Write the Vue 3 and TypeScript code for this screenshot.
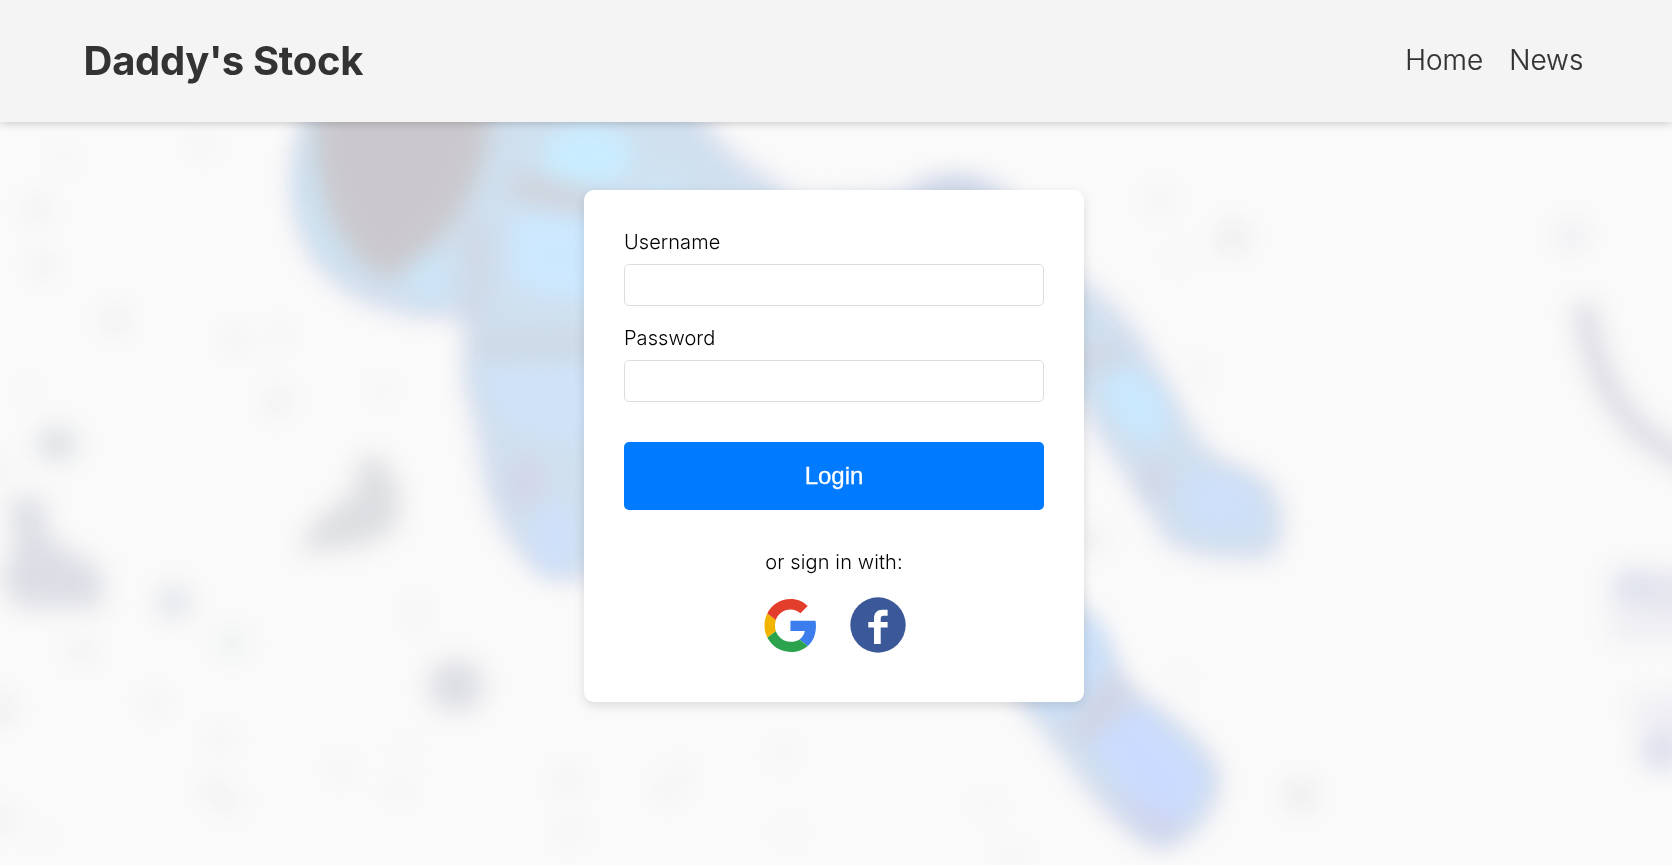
<script setup lang="ts">
import { ref } from 'vue'

type Speck = [x: number, y: number, r: number, opacity: number]

const username = ref('')
const password = ref('')

const links: string[] = ['Home', 'News']

// Faint star dust scattered behind the astronaut
const specks: Speck[] = [
  [63, 157, 11, 0.16], [37, 209, 13, 0.34], [42, 265, 13, 0.3], [115, 320, 13, 0.4],
  [203, 143, 13, 0.18], [235, 340, 13, 0.24], [280, 335, 11, 0.2], [278, 402, 13, 0.36],
  [28, 391, 10, 0.16], [382, 390, 10, 0.18], [3, 468, 11, 0.28], [82, 651, 12, 0.36],
  [155, 703, 12, 0.24], [0, 709, 14, 0.46], [220, 740, 12, 0.24], [212, 789, 12, 0.24],
  [228, 802, 12, 0.26], [343, 769, 11, 0.2], [400, 791, 11, 0.2], [416, 614, 11, 0.24],
  [407, 748, 9, 0.12], [0, 820, 13, 0.36], [40, 837, 9, 0.14],
  [568, 782, 13, 0.26], [570, 832, 12, 0.2], [668, 790, 12, 0.24], [682, 772, 10, 0.18],
  [783, 755, 10, 0.2], [790, 832, 10, 0.14], [987, 806, 11, 0.16], [1012, 856, 11, 0.18],
  [1160, 200, 13, 0.24], [1233, 238, 15, 0.5], [1180, 257, 10, 0.14], [1199, 373, 11, 0.18],
  [1092, 540, 14, 0.3], [1180, 677, 9, 0.16], [1301, 795, 15, 0.5],
]
</script>

<template>
  <div class="page">
    <svg class="backdrop" viewBox="0 0 1672 865" preserveAspectRatio="xMidYMid slice" aria-hidden="true">
      <defs>
        <filter id="soft" x="-20%" y="-20%" width="140%" height="140%" color-interpolation-filters="sRGB">
          <feGaussianBlur stdDeviation="12" />
        </filter>
        <filter id="detail" x="-30%" y="-30%" width="160%" height="160%" color-interpolation-filters="sRGB">
          <feGaussianBlur stdDeviation="12.500" />
        </filter>
      </defs>

      <g filter="url(#detail)" fill="#dedede">
        <circle v-for="([x, y, r, o], i) in specks" :key="i" :cx="x" :cy="y" :r="r" :opacity="o" />
      </g>

      <g filter="url(#detail)">
        <ellipse cx="57" cy="444" rx="20" ry="16" fill="#dbdee2" />
        <ellipse cx="174" cy="602" rx="17" ry="16" fill="#e2e4ea" />
        <ellipse cx="232" cy="643" rx="14" ry="13" fill="#eceff0" />
        <ellipse cx="456" cy="686" rx="28" ry="26" fill="#dddee4" />
        <path d="M300 552 L308 530 L338 502 L356 492 L358 460 L382 456 L401 492 L395 530 L362 546 Z" fill="#dddee1" />
        <path d="M9 498 L44 498 L48 536 L102 570 L102 608 L18 608 L0 580 L14 548 Z" fill="#dddee5" />
        <circle cx="1571" cy="235" r="13" fill="#eaebf0" />
        <path d="M1584 304 C1590 352 1606 400 1644 434 Q1664 450 1700 468" fill="none" stroke="#dbd9e2" stroke-width="22" />
        <path d="M1612 570 H1700 V640 H1612 Z" fill="#eeeef3" />
        <ellipse cx="1636" cy="586" rx="24" ry="15" fill="#dcdfec" />
        <path d="M1655 572 H1710 V610 H1655 Z" fill="#e5e5ee" />
        <path d="M1630 698 L1700 690 V768 L1650 762 Z" fill="#efeef4" />
        <circle cx="1660" cy="752" r="18" fill="#d9dceb" />
      </g>

      <g filter="url(#soft)">
        <path
          d="M316 100 C291 148 288 215 319 260 C357 310 405 313 466 315 C476 328 463 358 471 397 C482 423 482 483 505 526 C526 560 545 576 573 576 L700 560 L940 600 L1026 700 C1067 758 1104 812 1148 840 C1176 853 1218 812 1216 778 C1208 741 1149 707 1123 690 C1106 651 1092 623 1070 602 L900 480 L1080 392 C1106 455 1148 486 1165 535 C1188 555 1230 556 1270 554 C1286 529 1280 483 1246 475 C1223 467 1204 455 1195 438 C1175 410 1160 380 1142 348 C1120 313 1098 292 1070 280 L1010 199 C980 175 930 177 899 199 L798 205 C774 180 731 169 704 125 L690 95 Z"
          fill="#d0e0ef"
          stroke="#d3d5e8"
          stroke-width="7"
        />
      </g>

      <g filter="url(#detail)">
        <path d="M308 140 L299 190 L318 248 L370 292 L352 268 L322 220 L314 140 Z" fill="#cbe3f1" />
        <path d="M320 90 H492 C492 172 460 238 388 278 C342 264 300 180 320 90 Z" fill="#cac8cc" />
        <ellipse cx="430" cy="278" rx="20" ry="25" fill="#cbe5f7" />
        <ellipse cx="588" cy="156" rx="46" ry="30" fill="#c9edff" />
        <path d="M512 174 L600 190 L594 213 L514 199 Z" fill="#cfd1d9" />
        <path d="M510 212 L610 220 V306 L514 288 Z" fill="#cce8ff" />
        <path d="M466 222 L488 225 L484 320 L468 320 Z" fill="#cfd6e4" />
        <path d="M472 337 L600 335 V354 L480 356 Z" fill="#cdd6e2" />
        <path d="M476 368 L600 362 V450 L506 424 Z" fill="#cfe2f8" />
        <ellipse cx="526" cy="482" rx="17" ry="25" fill="#d3d4e7" />
        <ellipse cx="555" cy="538" rx="21" ry="36" fill="#cfe0fb" />
        <ellipse cx="662" cy="186" rx="18" ry="12" fill="#cde6f7" />
        <ellipse cx="955" cy="194" rx="34" ry="13" fill="#cfd4e6" />
        <ellipse cx="1096" cy="358" rx="32" ry="12" fill="#cfd5e2" />
        <ellipse cx="1136" cy="404" rx="25" ry="42" fill="#c9e8ff" transform="rotate(-34 1136 404)" />
        <ellipse cx="1156" cy="480" rx="13" ry="22" fill="#d1d5e5" />
        <path d="M1180 470 L1244 480 L1268 528 L1190 530 Z" fill="#cddffa" />
        <path d="M1030 620 L1094 620 L1112 662 L1064 718 L1026 700 Z" fill="#c9dffa" />
        <path d="M1110 670 L1134 698 L1088 744 L1068 732 Z" fill="#d0d3e4" />
        <path d="M1090 742 L1140 706 L1208 774 L1182 826 L1142 808 Z" fill="#cadbff" />
        <path d="M1088 776 L1120 796 L1184 820 L1162 844 Z" fill="#d0d3ec" />
      </g>
    </svg>

    <header class="topbar">
      <h1 class="brand">Daddy's Stock</h1>
      <nav class="nav">
        <a v-for="link in links" :key="link" class="nav-link" href="#">{{ link }}</a>
      </nav>
    </header>

    <main class="content">
      <form class="card" @submit.prevent>
        <label class="label" for="username">Username</label>
        <input id="username" v-model="username" class="field" type="text" />
        <label class="label" for="password">Password</label>
        <input id="password" v-model="password" class="field" type="password" />
        <button class="login" type="submit">Login</button>
        <p class="hint">or sign in with:</p>
        <div class="providers">
          <button class="provider" type="button" aria-label="Google">
            <svg class="google" viewBox="0 0 48 49" aria-hidden="true">
              <path fill="#3b7ded" d="M47.600 20.200H24.400v9.500h13.300c-.6 3.200-2.300 5.900-4.900 7.700l7.700 6C45.100 39.200 48 33 48 25.100c0-1.700-.1-3.300-.4-4.900z" />
              <path fill="#2ba24c" d="M24.400 49c6.500 0 11.900-2.100 16.100-5.600l-7.700-6c-2.100 1.400-5.100 2.100-8.400 2.100-6.300 0-11.600-4.200-13.500-9.900L3 35.700C7 43.600 15.100 49 24.400 49z" />
              <path fill="#f1b500" d="M10.900 29.600c-.5-1.500-.8-3.300-.8-5.100s.3-3.500.8-5.100L3 13.300C1.300 16.700.4 20.500.4 24.500S1.300 32.400 3 35.700z" />
              <path fill="#e23e2b" d="M24.400 9.600c3.500 0 6.700 1.200 9.200 3.600l6.800-6.800C36.200 2.400 30.900 0 24.400 0 15.100 0 7 5.400 3 13.300l7.900 6.100c1.900-5.700 7.200-9.800 13.500-9.800z" />
            </svg>
          </button>
          <button class="provider" type="button" aria-label="Facebook">
            <svg class="facebook" viewBox="0 0 56 56" aria-hidden="true">
              <circle cx="28" cy="28" r="27.700" fill="#3b5998" />
              <path fill="#fff" d="M24 47V30.500h-5.700V25H24v-3.400c0-5.700 3.200-8.800 8.400-8.800h5.200v5.900h-4c-2 0-2.900 1-2.900 2.800V25h6.900v5.500h-6.900V47z" />
            </svg>
          </button>
        </div>
      </form>
    </main>
  </div>
</template>

<style>
body {
  margin: 0;
  background: #fafafa;
}
</style>

<style scoped>
.page {
  position: relative;
  box-sizing: border-box;
  height: 100vh;
  overflow: hidden;
  background: #fafafa;
  font-family: Inter, "Liberation Sans", sans-serif;
  font-weight: 300;
}

.backdrop {
  position: absolute;
  inset: 0;
  width: 100%;
  height: 100%;
}

.topbar {
  position: relative;
  display: flex;
  align-items: center;
  justify-content: space-between;
  box-sizing: border-box;
  height: 122px;
  padding: 0 83.600px;
  background: #f4f4f4;
  box-shadow: 0 2px 8px rgba(0, 0, 0, 0.18);
  color: #333;
}

.brand {
  margin: 0;
  font-size: 40px;
  font-weight: 700;
  letter-spacing: -0.340px;
  line-height: 48px;
}

.nav {
  display: flex;
  gap: 26px;
  padding: 0 5px 2px 0;
}

.nav-link {
  color: #333;
  font-size: 28px;
  line-height: 36px;
  text-decoration: none;
  -webkit-text-stroke: 0.200px #333;
}

.content {
  position: relative;
  display: flex;
  justify-content: center;
  padding: 68px 4px 0 0;
}

.card {
  display: flex;
  flex-direction: column;
  box-sizing: border-box;
  width: 500px;
  height: 512px;
  padding: 40px;
  border-radius: 10px;
  background: #fff;
  box-shadow: 0 4px 12px rgba(0, 0, 0, 0.12);
  color: #000;
}

.label {
  margin-bottom: 10px;
  font-size: 20px;
  letter-spacing: 0.060px;
  line-height: 24px;
}

.field {
  box-sizing: border-box;
  height: 42px;
  margin: 0 0 20px;
  padding: 10px;
  border: 1px solid #ddd;
  border-radius: 5px;
  background: #fff;
  font: inherit;
  font-size: 16px;
  outline: none;
}

.login {
  height: 68px;
  margin-top: 20px;
  padding: 0;
  border: 0;
  border-radius: 5px;
  background: #007bff;
  color: #fff;
  font-family: "Liberation Sans", Arial, sans-serif;
  font-size: 24px;
  -webkit-text-stroke: 0.300px #fff;
}

.hint {
  margin: 40px 0 0;
  font-size: 20px;
  letter-spacing: 0.120px;
  line-height: 24px;
  text-align: center;
}

.providers {
  display: flex;
  align-items: center;
  gap: 34px;
  margin: 23px 0 0 140px;
}

.provider {
  display: flex;
  padding: 0;
  border: 0;
  background: none;
}

.google {
  width: 52px;
  height: 53px;
}

.facebook {
  width: 56px;
  height: 56px;
}
</style>
